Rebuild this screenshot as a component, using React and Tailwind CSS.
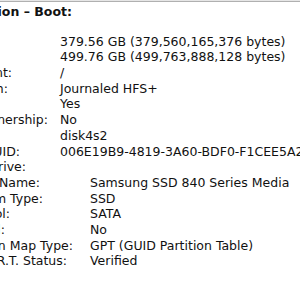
const rows = [
  { label: 'Capacity:', lw: 'w-0', vx: 'ml-[60px]', value: '379.56 GB (379,560,165,376 bytes)' },
  { label: 'Available:', lw: 'w-0', vx: 'ml-[60px]', value: '499.76 GB (499,763,888,128 bytes)' },
  { label: 'Mount Point:', lw: 'w-[12px]', vx: 'ml-[48px]', value: '/' },
  { label: 'File System:', lw: 'w-[8px]', vx: 'ml-[52px]', value: 'Journaled HFS+' },
  { label: 'Writable:', lw: 'w-0', vx: 'ml-[60px]', value: 'Yes' },
  { label: 'Ignore Ownership:', lw: 'w-[48px]', vx: 'ml-[12px]', value: 'No' },
  { label: 'BSD Name:', lw: 'w-0', vx: 'ml-[60px]', value: 'disk4s2' },
  { label: 'Volume UUID:', lw: 'w-[20px]', vx: 'ml-[40px]', value: '006E19B9-4819-3A60-BDF0-F1CEE5A2C1D7' },
  { label: 'Physical Drive:', lw: 'w-[26px]', vx: 'ml-[34px]', value: '' },
  { label: 'Media Name:', lw: 'w-[40px]', vx: 'ml-[50px]', value: 'Samsung SSD 840 Series Media' },
  { label: 'Medium Type:', lw: 'w-[43px]', vx: 'ml-[47px]', value: 'SSD' },
  { label: 'Protocol:', lw: 'w-[10px]', vx: 'ml-[80px]', value: 'SATA' },
  { label: 'Internal:', lw: 'w-[5px]', vx: 'ml-[85px]', value: 'No' },
  { label: 'Partition Map Type:', lw: 'w-[73px]', vx: 'ml-[17px]', value: 'GPT (GUID Partition Table)' },
  { label: 'S.M.A.R.T. Status:', lw: 'w-[67px]', vx: 'ml-[23px]', value: 'Verified' },
];

function Row({ label, lw, vx, value }) {
  return (
    <div className="flex h-[15.7px] items-start whitespace-nowrap">
      <div className={`${lw} shrink-0 flex justify-end overflow-hidden`}>
        <span>{label}</span>
      </div>
      <span className={vx}>{value}</span>
    </div>
  );
}

export default function App() {
  return (
    <div
      className="w-[300px] h-[300px] overflow-hidden bg-white text-[#111] text-[12.5px] leading-[15.7px]"
      style={{ fontFamily: '"DejaVu Sans", sans-serif' }}
    >
      {/* top rule */}
      <div className="h-px bg-[#e6e6e6]" />
      <div className="h-px bg-[#b0b0b0]" />

      {/* volume heading */}
      <div className="mt-[2px] flex w-[72px] justify-end overflow-hidden whitespace-nowrap font-bold">
        <span>Macintosh HD Partition – Boot:</span>
      </div>

      {/* properties */}
      <div className="mt-[14px]">
        {rows.map((r) => (
          <Row key={r.label} {...r} />
        ))}
      </div>
    </div>
  );
}
